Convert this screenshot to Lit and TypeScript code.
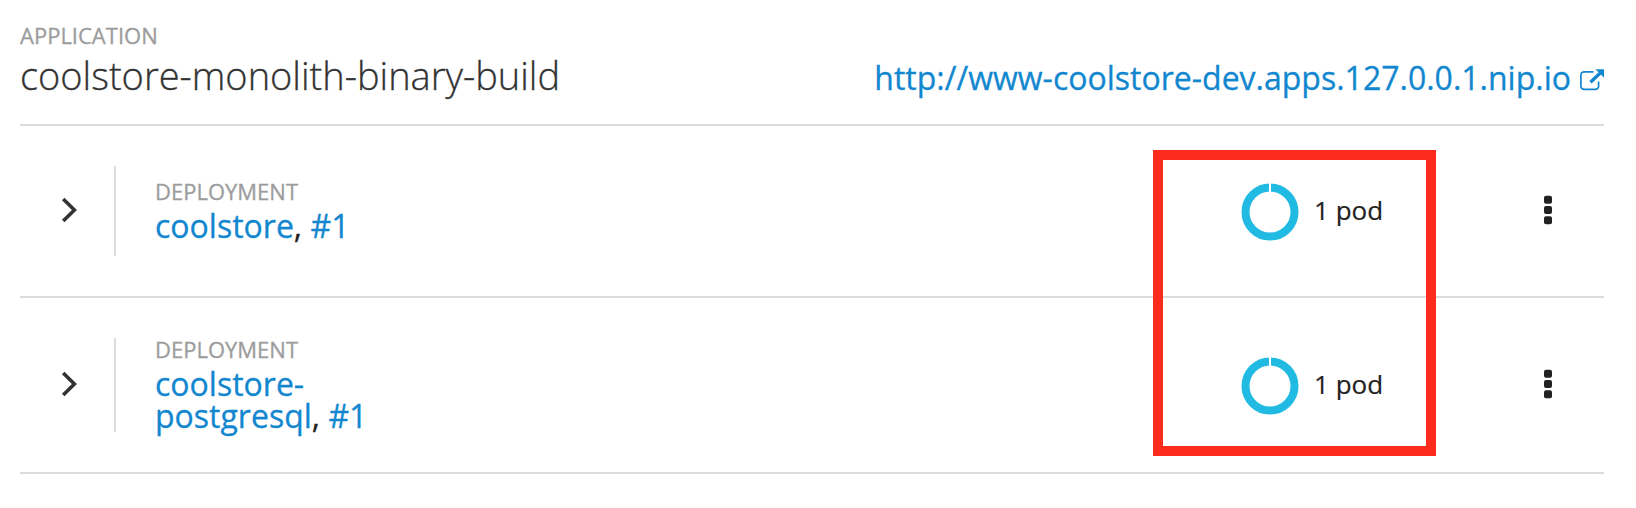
import { LitElement, html, css } from "lit";
import { customElement, property } from "lit/decorators.js";

interface Deployment {
  name: string;
  revision: string;
  pods: number;
}

const DEPLOYMENTS: Deployment[] = [
  { name: "coolstore", revision: "#1", pods: 1 },
  { name: "coolstore-postgresql", revision: "#1", pods: 1 },
];

@customElement("deployment-row")
export class DeploymentRow extends LitElement {
  @property({ attribute: false }) deployment!: Deployment;

  static styles = css`
    :host {
      display: flex;
      align-items: center;
      padding: 40px 0;
      border-bottom: 2px solid #dcdcdc;
    }
    .toggle {
      flex: none;
      width: 94px;
      display: flex;
      align-items: center;
      padding-left: 41px;
      box-sizing: border-box;
      margin-top: -2px;
    }
    .details {
      flex: 1;
      min-height: 90px;
      box-sizing: border-box;
      border-left: 2px solid #dcdcdc;
      padding-left: 39px;
      display: flex;
      flex-direction: column;
      justify-content: center;
    }
    .label {
      font-size: 22px;
      line-height: 22px;
      color: #9c9c9c;
      margin-bottom: 8px;
      -webkit-text-stroke: 0.3px currentColor;
    }
    .name {
      width: 230px;
      font-size: 32px;
      line-height: 32px;
      color: #222;
      -webkit-text-stroke: 0.3px currentColor;
    }
    a {
      color: #1287cf;
      text-decoration: none;
      -webkit-text-stroke-color: #1287cf;
    }
    .pods {
      flex: none;
      width: 303px;
      display: flex;
      align-items: center;
      gap: 15px;
      font-size: 26px;
      line-height: 36px;
      color: #222;
    }
    .pods span {
      margin-top: -2px;
      -webkit-text-stroke: 0.2px currentColor;
    }
    .ring {
      margin-top: 2px;
    }
    .menu {
      flex: none;
      width: 60px;
      margin-top: -2px;
      display: flex;
    }
    svg {
      display: block;
    }
  `;

  render() {
    const { name, revision, pods } = this.deployment;
    return html`
      <div class="toggle">
        <svg width="16" height="26" viewBox="0 0 16 26">
          <path d="M2.200 2 L13.400 13 L2.200 24" fill="none" stroke="#333" stroke-width="3.6" />
        </svg>
      </div>
      <div class="details">
        <div class="label">DEPLOYMENT</div>
        <div class="name"><a>${name}</a>, <a>${revision}</a></div>
      </div>
      <div class="pods">
        <svg class="ring" width="58" height="58" viewBox="0 0 58 58">
          <circle cx="29" cy="29" r="24.5" fill="none" stroke="#20bae3" stroke-width="8" />
          <rect x="28" y="0" width="2" height="10" fill="#fff" />
        </svg>
        <span>${pods} pod</span>
      </div>
      <div class="menu">
        <svg width="8" height="30" viewBox="0 0 8 30" fill="#222">
          <rect x="0" y="0.7" width="8" height="8" rx="2" />
          <rect x="0" y="11" width="8" height="8" rx="2" />
          <rect x="0" y="21.3" width="8" height="8" rx="2" />
        </svg>
      </div>
    `;
  }
}

@customElement("app-root")
export class AppRoot extends LitElement {
  static styles = css`
    :host {
      display: block;
      position: relative;
      height: 508px;
      box-sizing: border-box;
      padding: 0 32px 0 20px;
      background: #fff;
      overflow: hidden;
      font-family: "Open Sans", "Noto Sans", sans-serif;
    }
    .header {
      height: 126px;
      box-sizing: border-box;
      border-bottom: 2px solid #dcdcdc;
      padding-top: 23px;
      display: flex;
      justify-content: space-between;
      align-items: flex-start;
      white-space: nowrap;
    }
    .label {
      font-size: 22px;
      line-height: 24px;
      color: #9c9c9c;
      -webkit-text-stroke: 0.3px currentColor;
    }
    .title {
      font-size: 38px;
      font-weight: 300;
      line-height: 44px;
      margin: 6px 0 0;
      color: #333;
      -webkit-text-stroke: 0.3px currentColor;
    }
    .route {
      display: flex;
      align-items: center;
      gap: 9px;
      margin-top: 33px;
      font-size: 32px;
      line-height: 44px;
      color: #1287cf;
      text-decoration: none;
      -webkit-text-stroke: 0.3px currentColor;
    }
    .route svg {
      display: block;
      margin-top: 4px;
    }
    .highlight {
      position: absolute;
      left: 1153px;
      top: 150px;
      width: 283px;
      height: 306px;
      box-sizing: border-box;
      border: 10px solid #fd2b1e;
    }
  `;

  render() {
    return html`
      <div class="header">
        <div>
          <div class="label">APPLICATION</div>
          <h1 class="title">coolstore-monolith-binary-build</h1>
        </div>
        <a class="route">
          <span>http://www-coolstore-dev.apps.127.0.0.1.nip.io</span>
          <svg width="24" height="22" viewBox="0 0 24 22">
            <path d="M13.500 2.800 H4.500 Q0.900 2.800 0.900 6.400 V16.700 Q0.900 20.300 4.500 20.300 H15 Q18.600 20.300 18.600 16.700 V12.500" fill="none" stroke="#1287cf" stroke-width="1.700" />
            <path d="M10.500 13.300 L20 4.200" fill="none" stroke="#1287cf" stroke-width="3.300" />
            <path d="M15.500 0.300 H24 V8.800 Z" fill="#1287cf" />
          </svg>
        </a>
      </div>
      ${DEPLOYMENTS.map((d) => html`<deployment-row .deployment=${d}></deployment-row>`)}
      <div class="highlight"></div>
    `;
  }
}
